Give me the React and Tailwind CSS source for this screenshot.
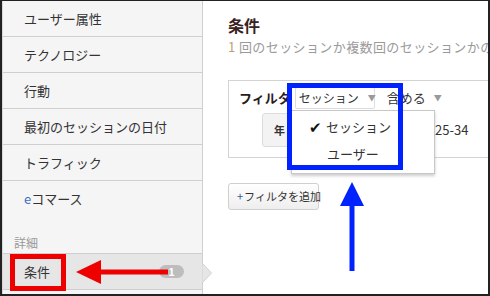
const jp = { fontFamily: '"Noto Sans CJK JP", "Liberation Sans", sans-serif' };

const items = ["ユーザー属性", "テクノロジー", "行動", "最初のセッションの日付", "トラフィック"];

function Sidebar() {
  return (
    <div className="w-[201px] shrink-0 bg-[#f5f5f5] border-r border-[#cfcfcf] border-l border-l-[#d8d8d8] flex flex-col text-[13px] text-[#333]">
      {items.map((t) => (
        <div key={t} className="h-[36px] border-b border-[#cfcfcf] flex items-center pl-[21px]">
          {t}
        </div>
      ))}
      <div className="h-[36px] flex items-center pl-[21px]">
        <span className="text-[#3a6fc4]">e</span>コマース
      </div>
      <div className="h-[36px] flex items-end pl-[11px] pb-[1px] text-[12px] text-[#999]">詳細</div>
      <div className="relative h-[37px] bg-[#e6e6e6] border-y border-[#cfcfcf] flex items-center pl-[21px] pr-[18px] justify-between">
        <span>条件</span>
        <span className="w-[25px] h-[13px] rounded-full bg-[#bdbdbd] text-white text-[11px] font-bold leading-[13px] text-center">1</span>
        <svg className="absolute right-[-10px] top-[9px]" width="10" height="20" viewBox="0 0 10 20">
          <path d="M0 0 L9.5 10 L0 20 Z" fill="#e6e6e6" stroke="#d0d0d0" strokeWidth="1" />
        </svg>
      </div>
    </div>
  );
}

function Main() {
  return (
    <div className="flex-1 min-w-0 bg-white pl-[25px] pt-[14px]">
      <div className="text-[16px] font-bold text-[#3a2222] leading-[20px]">条件</div>
      <div className="mt-[3px] text-[13px] text-[#9a9a9a] whitespace-nowrap leading-[18px] tracking-[0.4px]">
        <span className="text-[#b8a275]">1</span> 回のセッションか複数回のセッションかの条件
      </div>
      <div className="mt-[24px] h-[78px] border border-r-0 border-[#d4d4d4] pl-[10px] pt-[6px]">
        <div className="flex items-center h-[22px] whitespace-nowrap">
          <span className="text-[13px] font-bold text-[#2a1a1a]">フィルタ</span>
          <div className="ml-[4px] h-[22px] w-[80px] border border-[#dcdcdc] rounded-[2px] flex items-center pl-[3px] text-[12px] text-[#333]">
            セッション<span className="ml-[9px] text-[8px] text-[#999]">▼</span>
          </div>
          <span className="ml-[12px] text-[13px] text-[#333]">含める</span>
          <span className="ml-[8px] text-[8px] text-[#999]">▼</span>
        </div>
        <div className="flex items-center mt-[4px]">
          <div className="ml-[23px] h-[34px] w-[40px] bg-[#f3f3f3] border border-[#dcdcdc] rounded-[3px] flex items-center pl-[11px] text-[11px] font-bold text-[#333]">年</div>
          <span className="ml-[133px] text-[13px] text-[#333]">25-34</span>
        </div>
      </div>
      <div className="mt-[25px] w-[91px] h-[27px] border border-[#cfcfcf] rounded-[3px] bg-gradient-to-b from-white to-[#eeeeee] flex items-center pl-[8px] text-[11px] text-[#333] whitespace-nowrap">
        <span className="text-[#3355aa] mr-[1px]">+</span>フィルタを追加
      </div>
    </div>
  );
}

export default function App() {
  return (
    <div style={jp} className="relative w-[490px] h-[296px] overflow-hidden bg-white border-t border-x-2 border-b-2 border-[#222] flex">
      <Sidebar />
      <Main />

      {/* dropdown menu */}
      <div className="absolute left-[289px] top-[109px] w-[144px] h-[64px] bg-white border border-[#c8c8c8] shadow-[0_2px_3px_rgba(0,0,0,0.2)] text-[13px] text-[#333]">
        <div className="flex items-center h-[32px] pl-[17px]">
          <span className="text-[15px] mr-[4px] text-[#111]">✔</span>セッション
        </div>
        <div className="flex items-center h-[22px] pl-[35px]">ユーザー</div>
      </div>

      {/* blue highlight */}
      <div className="absolute left-[285px] top-[82px] w-[116px] h-[87px] border-[5px] border-[#0022ff]" />

      {/* blue arrow */}
      <svg className="absolute left-[336px] top-[180px]" width="28" height="92" viewBox="0 0 28 92">
        <path d="M14 1 L26 25 L2 25 Z" fill="#0022ff" />
        <rect x="11.5" y="24" width="5" height="66" fill="#0022ff" />
      </svg>

      {/* red box */}
      <div className="absolute left-[8px] top-[253px] w-[56px] h-[37px] border-[5px] border-[#ee0000]" />

      {/* red arrow */}
      <svg className="absolute left-[72px] top-[257px]" width="100" height="28" viewBox="0 0 100 28">
        <path d="M2 14 L27 2 L27 26 Z" fill="#ee0000" />
        <rect x="26" y="11.5" width="68" height="5" fill="#ee0000" />
      </svg>
    </div>
  );
}
